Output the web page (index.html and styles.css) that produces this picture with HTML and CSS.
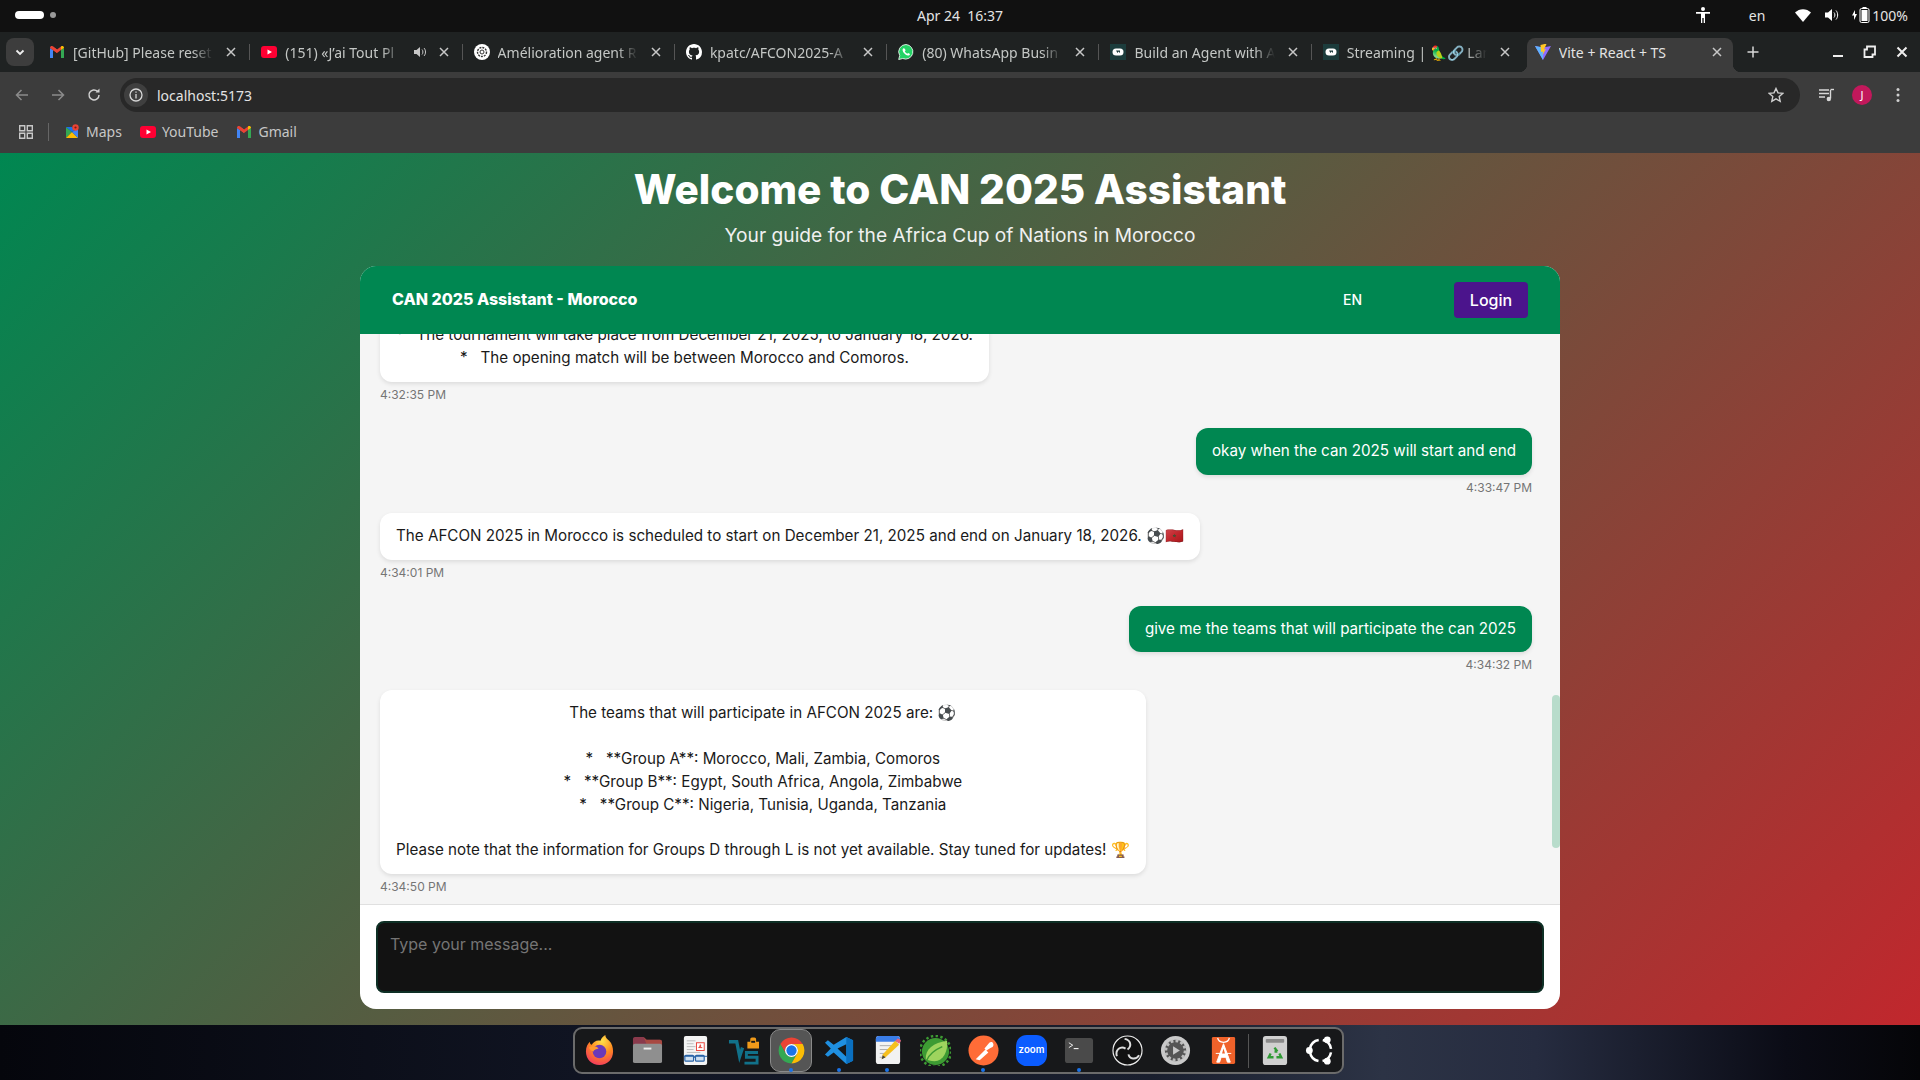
FILE: index.html
```html
<!DOCTYPE html>
<html>
<head>
<meta charset="utf-8">
<title>Vite + React + TS</title>
<link rel="stylesheet" href="styles.css">
</head>
<body>
<svg class="defs" width="0" height="0">
  <defs>
    <symbol id="gmail" viewBox="0 0 16 16">
      <path d="M1 14V4l3 2v8z" fill="#4285f4"/><path d="M12 14V6l3-2v10z" fill="#34a853"/>
      <path d="M1 4c0-2 2-2.500 3-1.500L8 5.500l-0 3.500L1 4z" fill="#ea4335"/><path d="M4 2.500L8 5.500l4-3v3.500L8 9 4 6z" fill="#ea4335"/>
      <path d="M12 2.500c1-1 3-.5 3 1.500l-3 2z" fill="#fbbc04"/>
    </symbol>
    <symbol id="yt" viewBox="0 0 16 16">
      <rect y="2" width="16" height="12" rx="3" fill="#ff0033"/><path d="M6.500 5.500v5L11 8z" fill="#fff"/>
    </symbol>
    <symbol id="lang" viewBox="0 0 16 16">
      <rect width="16" height="16" fill="#1c3c3c"/><rect x="2.500" y="4.500" width="11" height="7" rx="3.500" fill="#fff"/><path d="M6 6.500l1.500 2.500 1-1.500 1.500 1.500v-2.500z" fill="#1c3c3c"/>
    </symbol>
    <symbol id="close" viewBox="0 0 16 16">
      <path d="M4 4l8 8M12 4l-8 8" stroke="#c7c7c7" stroke-width="1.500" fill="none"/>
    </symbol>
  </defs>
</svg>

<div class="topbar">
  <div class="workspaces"><span class="pill"></span><span class="dot"></span></div>
  <div class="clock">Apr 24&nbsp;&nbsp;16:37</div>
  <div class="tray">
    <svg class="tray-a11y" width="14" height="16" viewBox="0 0 14 16"><circle cx="7" cy="2" r="2" fill="#fff"/><path d="M0 5h14v1.800H9V16H7.700v-5H6.300v5H5V6.800H0z" fill="#fff"/></svg>
    <span class="tray-lang">en</span>
    <svg class="tray-wifi" width="16" height="13" viewBox="0 0 16 13"><path d="M0 3.500C4.500-1 11.500-1 16 3.500L8 13z" fill="#fff"/></svg>
    <svg class="tray-vol" width="15" height="14" viewBox="0 0 15 14"><path d="M0 4.500h3L7 1v12L3 9.500H0z" fill="#fff"/><path d="M9 4.500c1.200 1.200 1.200 3.800 0 5M11 2.500c2.200 2.400 2.200 6.600 0 9" stroke="#fff" fill="none"/></svg>
    <svg class="tray-bat" width="18" height="16" viewBox="0 0 18 16"><path d="M3 3L0 8.500h2V13l3-6H3z" fill="#fff"/><rect x="8" y="1.500" width="9" height="14" rx="1.500" fill="none" stroke="#fff"/><rect x="9.500" y="3" width="6" height="11" fill="#fff"/><rect x="10.500" y="0" width="4" height="1.500" fill="#fff"/></svg>
    <span>100%</span>
  </div>
</div>

<div class="tabstrip">
  <div class="tab-search"><svg width="12" height="12" viewBox="0 0 12 12"><path d="M2.500 4.500L6 8l3.500-3.500" stroke="#eee" stroke-width="1.800" fill="none"/></svg></div>
  <div class="tab">
    <svg class="fav"><use href="#gmail"/></svg>
    <span class="tab-title">[GitHub] Please reset</span>
    <svg class="tab-close"><use href="#close"/></svg>
  </div>
  <div class="tab">
    <svg class="fav"><use href="#yt"/></svg>
    <span class="tab-title">(151) «J’ai Tout Pl</span>
    <svg class="tab-audio" width="16" height="16" viewBox="0 0 16 16"><path d="M2 6h2.500L8 3v10L4.500 10H2z" fill="#c7c7c7"/><path d="M10 5.500c1.200 1.300 1.200 3.700 0 5M12 4c2 2.200 2 5.800 0 8" stroke="#c7c7c7" fill="none"/></svg>
    <svg class="tab-close"><use href="#close"/></svg>
  </div>
  <div class="tab">
    <svg class="fav" viewBox="0 0 16 16"><circle cx="8" cy="8" r="8" fill="#fff"/><circle cx="8" cy="8" r="4.500" fill="none" stroke="#333" stroke-width="1.400" stroke-dasharray="2 1"/><circle cx="8" cy="8" r="2" fill="none" stroke="#333"/></svg>
    <span class="tab-title">Amélioration agent R</span>
    <svg class="tab-close"><use href="#close"/></svg>
  </div>
  <div class="tab">
    <svg class="fav" viewBox="0 0 16 16"><path fill="#fff" d="M8 0C3.580 0 0 3.580 0 8c0 3.540 2.290 6.530 5.470 7.590.4.070.55-.17.55-.38 0-.19-.01-.82-.01-1.490-2.010.37-2.530-.49-2.690-.94-.09-.23-.48-.94-.82-1.130-.28-.15-.68-.52-.01-.53.63-.01 1.080.58 1.230.82.72 1.210 1.870.87 2.330.66.070-.52.28-.87.51-1.070-1.780-.2-3.640-.89-3.640-3.950 0-.87.31-1.590.82-2.150-.08-.2-.36-1.020.08-2.120 0 0 .67-.21 2.200.82.64-.18 1.320-.27 2-.27.68 0 1.360.09 2 .27 1.530-1.040 2.200-.82 2.200-.82.44 1.100.16 1.920.08 2.120.51.56.82 1.270.82 2.150 0 3.070-1.870 3.750-3.650 3.950.29.25.54.73.54 1.480 0 1.070-.01 1.930-.01 2.200 0 .21.15.46.55.38A8.013 8.013 0 0016 8c0-4.420-3.580-8-8-8z"/></svg>
    <span class="tab-title">kpatc/AFCON2025-A</span>
    <svg class="tab-close"><use href="#close"/></svg>
  </div>
  <div class="tab">
    <svg class="fav" viewBox="0 0 16 16"><path d="M8 .5a7.300 7.300 0 0 0-6.300 11L.7 15.500l4-1A7.300 7.300 0 1 0 8 .5z" fill="#25d366" stroke="#fff" stroke-width=".8"/><path d="M5.500 4.300c-.5.300-1 1-.9 2 .2 2 3 5 5.300 5.300 1 .1 1.700-.5 2-1.100l-.2-.8-1.600-.8-.8.9c-1-.3-2.200-1.500-2.500-2.500l.8-.8-.7-1.800z" fill="#fff"/></svg>
    <span class="tab-title">(80) WhatsApp Busin</span>
    <svg class="tab-close"><use href="#close"/></svg>
  </div>
  <div class="tab">
    <svg class="fav"><use href="#lang"/></svg>
    <span class="tab-title">Build an Agent with A</span>
    <svg class="tab-close"><use href="#close"/></svg>
  </div>
  <div class="tab tab-wide">
    <svg class="fav"><use href="#lang"/></svg>
    <span class="tab-title">Streaming | 🦜🔗 Lan</span>
    <svg class="tab-close"><use href="#close"/></svg>
  </div>
  <div class="tab tab-active">
    <svg class="fav" viewBox="0 0 16 16"><path d="M0 2l8 14 8-14-8 1.500z" fill="#8f6cff"/><path d="M0 2l8 14V3.500z" fill="#5fb4ff"/><path d="M9.500 0L5.500 1 6 8l2-.5-.5 3.500 3.500-6-2 .5L11.500 0z" fill="#ffc626"/></svg>
    <span class="tab-title">Vite + React + TS</span>
    <svg class="tab-close"><use href="#close"/></svg>
  </div>
  <svg class="new-tab" width="14" height="14" viewBox="0 0 14 14"><path d="M7 1.500v11M1.500 7h11" stroke="#d8d8d8" stroke-width="1.500"/></svg>
  <div class="win-btns">
    <svg width="14" height="14" viewBox="0 0 14 14"><path d="M2 11h10" stroke="#eee" stroke-width="2"/></svg>
    <svg width="14" height="14" viewBox="0 0 14 14"><path d="M4 1.500h8v8H9.500V12h-8V4.500H4z" fill="none" stroke="#eee" stroke-width="1.800"/></svg>
    <svg width="14" height="14" viewBox="0 0 14 14"><path d="M2.500 2.500l9 9M11.500 2.500l-9 9" stroke="#eee" stroke-width="2"/></svg>
  </div>
</div>

<div class="toolbar">
  <svg class="nav-btn" width="16" height="16" viewBox="0 0 16 16"><path d="M14 8H3M7.500 3L2.500 8l5 5" stroke="#8b8b8b" stroke-width="1.500" fill="none"/></svg>
  <svg class="nav-btn" width="16" height="16" viewBox="0 0 16 16"><path d="M2 8h11M8.500 3l5 5-5 5" stroke="#8b8b8b" stroke-width="1.500" fill="none"/></svg>
  <svg class="nav-btn" width="16" height="16" viewBox="0 0 16 16"><path d="M13 8a5 5 0 1 1-1.500-3.600" stroke="#d0d0d0" stroke-width="1.500" fill="none"/><path d="M13.500 1.500v4h-4z" fill="#d0d0d0"/></svg>
  <div class="omnibox">
    <span class="site-info"><svg width="14" height="14" viewBox="0 0 14 14"><circle cx="7" cy="7" r="6" fill="none" stroke="#d8d8d8" stroke-width="1.300"/><path d="M7 6v4.500M7 3.500v1.300" stroke="#d8d8d8" stroke-width="1.300"/></svg></span>
    <span class="url">localhost:5173</span>
    <svg class="star" width="16" height="16" viewBox="0 0 16 16"><path d="M8 1.500l2 4.400 4.800.5-3.600 3.200 1 4.700L8 11.900l-4.200 2.400 1-4.700L1.200 6.400 6 5.900z" fill="none" stroke="#d0d0d0" stroke-width="1.400"/></svg>
  </div>
  <svg class="media-btn" width="16" height="16" viewBox="0 0 16 16"><path d="M0 3h10M0 6.500h10M0 10h6" stroke="#d8d8d8" stroke-width="1.400"/><path d="M11.500 3v8.500" stroke="#d8d8d8" stroke-width="1.400"/><path d="M11.500 2.500H15" stroke="#d8d8d8" stroke-width="1.400"/><circle cx="9.800" cy="12" r="2.200" fill="#d8d8d8"/></svg>
  <span class="avatar">J</span>
  <svg class="menu-btn" width="4" height="16" viewBox="0 0 4 16"><circle cx="2" cy="2.500" r="1.500" fill="#d0d0d0"/><circle cx="2" cy="8" r="1.500" fill="#d0d0d0"/><circle cx="2" cy="13.500" r="1.500" fill="#d0d0d0"/></svg>
</div>

<div class="bookmarks">
  <svg class="apps" width="14" height="14" viewBox="0 0 14 14"><path d="M.7.700h5v5h-5zM8.300.700h5v5h-5zM.7 8.300h5v5h-5zM8.300 8.300h5v5h-5z" fill="none" stroke="#c7c7c7" stroke-width="1.400"/></svg>
  <span class="bm-sep"></span>
  <div class="bm">
    <svg class="bm-icon" viewBox="0 0 16 16"><path d="M2 3l6 5-6 6z" fill="#34a853"/><path d="M2 14l6-6 6 6z" fill="#fbbc04"/><path d="M8 8l6-4v10z" fill="#4285f4"/><path d="M2 3h6l3 3-3 2z" fill="#1a73e8"/><circle cx="11.500" cy="3.500" r="3.200" fill="#ea4335"/><circle cx="11.500" cy="3.500" r="1.100" fill="#7a1a12"/></svg>
    <span>Maps</span>
  </div>
  <div class="bm">
    <svg class="bm-icon"><use href="#yt"/></svg>
    <span>YouTube</span>
  </div>
  <div class="bm">
    <svg class="bm-icon"><use href="#gmail"/></svg>
    <span>Gmail</span>
  </div>
</div>

<div class="page">
  <h1 class="page-title">Welcome to CAN 2025 Assistant</h1>
  <p class="page-sub">Your guide for the Africa Cup of Nations in Morocco</p>

  <div class="chat">
    <div class="chat-head">
      <div class="chat-name">CAN 2025 Assistant - Morocco</div>
      <div class="chat-lang">EN</div>
      <button class="login">Login</button>
    </div>

    <div class="messages">
      <div class="scroll-thumb"></div>

      <div class="msg bot">
        <div class="bubble">*   The tournament will take place from December 21, 2025, to January 18, 2026.
*   The opening match will be between Morocco and Comoros.</div>
        <div class="time">4:32:35 PM</div>
      </div>
      <div class="msg user">
        <div class="bubble">okay when the can 2025 will start and end</div>
        <div class="time">4:33:47 PM</div>
      </div>
      <div class="msg bot">
        <div class="bubble">The AFCON 2025 in Morocco is scheduled to start on December 21, 2025 and end on January 18, 2026. ⚽🇲🇦</div>
        <div class="time">4:34:01 PM</div>
      </div>
      <div class="msg user">
        <div class="bubble">give me the teams that will participate the can 2025</div>
        <div class="time">4:34:32 PM</div>
      </div>
      <div class="msg bot">
        <div class="bubble">The teams that will participate in AFCON 2025 are: ⚽

*   **Group A**: Morocco, Mali, Zambia, Comoros
*   **Group B**: Egypt, South Africa, Angola, Zimbabwe
*   **Group C**: Nigeria, Tunisia, Uganda, Tanzania

Please note that the information for Groups D through L is not yet available. Stay tuned for updates! 🏆</div>
        <div class="time">4:34:50 PM</div>
      </div>
    </div>

    <div class="composer">
      <textarea class="composer-input" placeholder="Type your message..."></textarea>
    </div>
  </div>
</div>

<div class="desk">
  <div class="dock">
    <div class="dock-item">
      <svg viewBox="0 0 32 32"><defs><radialGradient id="ff" cx=".6" cy=".2" r=".95"><stop offset="0" stop-color="#ffe14a"/><stop offset=".45" stop-color="#ff8a1f"/><stop offset="1" stop-color="#f0246e"/></radialGradient></defs><path d="M2 17C2 12 4 9 6 7c0 2 1 3 2 3 2-3 5-5 9-4 1-3 3-5 5-6 0 3 2 4 4 6 3 3 4 7 4 11 0 8-6 14-14 14S2 25 2 17z" fill="url(#ff)"/><circle cx="16" cy="17" r="7" fill="#6b39b8"/><path d="M5 13c3-2 8-2 10 1-2 1-5 1-5 3-2 0-4-2-5-4z" fill="#ff9a2e"/></svg>
    </div>
    <div class="dock-item">
      <svg viewBox="0 0 32 32"><path d="M1 4c0-1 1-2 2-2h9l3 3h14c1 0 2 1 2 2v5H1z" fill="#8a3a4c"/><path d="M12 2l3 3h14c1 0 2 1 2 2v5H16z" fill="#b5503f" opacity=".7"/><rect x="1" y="9" width="30" height="20" rx="2" fill="#8f8f8f"/><rect x="12" y="13" width="8" height="2" fill="#eee"/></svg>
    </div>
    <div class="dock-item">
      <svg viewBox="0 0 32 32"><rect x="4" y="1" width="24" height="30" rx="2" fill="#f4f4f4"/><path d="M7 6h9M7 9h7M7 12h9M7 15h7M7 18h14" stroke="#bbb"/><rect x="17" y="8" width="8" height="8" fill="#fff" stroke="#e8453c"/><path d="M19 13c2 0 3-1 2-3l-1 3h3" stroke="#e8453c" fill="none"/><rect x="5" y="21" width="9" height="6" rx="1" fill="#cfe0f0" stroke="#2a64a8" stroke-width="1.200"/><rect x="16" y="21" width="9" height="6" rx="1" fill="#cfe0f0" stroke="#2a64a8" stroke-width="1.200"/><path d="M14 23h2M4 22h24" stroke="#2a64a8"/></svg>
    </div>
    <div class="dock-item">
      <svg viewBox="0 0 32 32"><path d="M1 7h8l3 15 3-9" fill="none" stroke="#11718a" stroke-width="3.500"/><path d="M31 18H19v5h11v6H17" fill="none" stroke="#11718a" stroke-width="3"/><path d="M20 14V7h3V4c0-2 6-2 6 0v3h3v7z" fill="#f09a1a"/><rect x="24" y="6" width="4" height="2" fill="#16181a"/></svg>
    </div>
    <div class="dock-item dock-active">
      <svg viewBox="0 0 48 48"><path d="M41.320 14A20 20 0 0 0 6.680 14L15.340 29A10 10 0 0 1 24 14z" fill="#ea4335"/><path d="M6.680 14A20 20 0 0 0 24 44L32.660 29A10 10 0 0 1 15.340 29z" fill="#34a853"/><path d="M24 44A20 20 0 0 0 41.320 14L24 14A10 10 0 0 1 32.660 29z" fill="#fbbc04"/><circle cx="24" cy="24" r="10" fill="#fff"/><circle cx="24" cy="24" r="8" fill="#1a73e8"/></svg>
      <i class="run"></i>
    </div>
    <div class="dock-item">
      <svg viewBox="0 0 32 32"><path d="M23 2l7 3.500v21L23 30 10 18l-6 4.500-3-2.500 6-6-6-6 3-2.500L10 10z" fill="#1f8fe0"/><path d="M23 9.500L14 14l9 8.500z" fill="#16181a"/><path d="M23 2l7 3.500v21L23 30z" fill="#0a6fbf"/></svg>
      <i class="run"></i>
    </div>
    <div class="dock-item">
      <svg viewBox="0 0 32 32"><rect x="4" y="1" width="25" height="29" rx="3" fill="#f2f2f2"/><path d="M4 4c0-2 1-3 3-3h19c2 0 3 1 3 3v3H4z" fill="#3a7de8"/><path d="M8 11h12M8 15h10M8 19h7M8 23h5" stroke="#aaa"/><path d="M10 25l1-5L24 6l4 4-14 13z" fill="#f6c01e"/><path d="M24 6l2-2c1-1 3 1 4 2l-2 3z" fill="#e8647a"/><path d="M10 25l1-4 3 2z" fill="#444"/></svg>
      <i class="run"></i>
    </div>
    <div class="dock-item">
      <svg viewBox="0 0 32 32"><circle cx="16" cy="17" r="14" fill="#3d9b33"/><circle cx="16" cy="17" r="16" fill="none" stroke="#3d9b33" stroke-width="2.500" stroke-dasharray="2.500 2.500"/><path d="M6 25C5 15 14 8 28 6c1 11-4 21-13 21-4 0-7-1-9-2z" fill="#9ed45e"/><path d="M7 26c3-7 9-11 16-14" stroke="#3d9b33" fill="none" stroke-width="1.500"/></svg>
    </div>
    <div class="dock-item">
      <svg viewBox="0 0 32 32"><circle cx="16" cy="16" r="15.500" fill="#ff6c37"/><path d="M8 25l10-10 3 3-9 8zM17 14l5-6c1-1 4-1 4 1 1 2-1 4-2 4l-5 3z" fill="#fff"/></svg>
      <i class="run"></i>
    </div>
    <div class="dock-item">
      <svg viewBox="0 0 32 32"><rect width="32" height="32" rx="11" fill="#0b5cff"/><text class="zoom-word" x="16" y="19" text-anchor="middle">zoom</text></svg>
    </div>
    <div class="dock-item">
      <svg viewBox="0 0 32 32"><rect x="1" y="3" width="29" height="26" rx="3" fill="#4a4a4a"/><path d="M5 8l4 2.500-4 2.500" stroke="#eee" fill="none"/><path d="M10 14h5" stroke="#eee" stroke-width="1.200"/></svg>
      <i class="run"></i>
    </div>
    <div class="dock-item">
      <svg viewBox="0 0 32 32"><circle cx="16" cy="16" r="15" fill="#111" stroke="#eee" stroke-width="1.200"/><path d="M13 4c6 1 8 7 3 11M28 21c-3 5-10 4-11-1M5 22C3 15 9 11 14 14" fill="none" stroke="#ddd" stroke-width="2"/></svg>
    </div>
    <div class="dock-item">
      <svg viewBox="0 0 32 32"><circle cx="16" cy="16" r="15" fill="#c9c9c9"/><circle cx="16" cy="16" r="11" fill="#555"/><circle cx="16" cy="16" r="10" fill="none" stroke="#bdbdbd" stroke-width="3" stroke-dasharray="3 2.200"/><path d="M13.500 11.500v9l7-4.500z" fill="#c9c9c9"/></svg>
    </div>
    <div class="dock-item">
      <svg viewBox="0 0 32 32"><rect x="4" y="2" width="24" height="28" rx="1.500" fill="#f0622a"/><path d="M10 3c1 6 11 6 12 0" stroke="#fff" fill="none" stroke-width="1.300"/><path d="M16 9l-7 19h3l1.500-5h5l1.500 5h3z M8 19h16" fill="#fff" stroke="#fff"/><path d="M16 14l-1.500 5h3z" fill="#f0622a"/></svg>
    </div>
    <span class="dock-sep"></span>
    <div class="dock-item">
      <svg viewBox="0 0 32 32"><rect x="4" y="1" width="25" height="30" rx="3" fill="#d0d0d0"/><rect x="7" y="4" width="19" height="4" rx="1" fill="#8a8a8a"/><path d="M16 13l3 4M19 17h-3M12 19l-2 4h5M21 19l2 4h-5" fill="none" stroke="#2f9a34" stroke-width="2.400"/></svg>
    </div>
    <div class="dock-item dock-last">
      <svg viewBox="0 0 32 32"><circle cx="16" cy="16" r="11" fill="none" stroke="#fff" stroke-width="2.600" stroke-dasharray="13 4.300" stroke-dashoffset="-2"/><circle cx="23" cy="5" r="3.500" fill="#fff"/><circle cx="23" cy="27" r="3.500" fill="#fff"/><circle cx="4.500" cy="16" r="3.500" fill="#fff"/></svg>
    </div>
  </div>
</div>
</body>
</html>
```

FILE: styles.css
```css
* {
  box-sizing: border-box;
}

html, body {
  margin: 0;
  height: 100%;
}

body {
  width: 1920px;
  height: 1080px;
  overflow: hidden;
  display: flex;
  flex-direction: column;
  font-family: "Noto Sans", sans-serif;
  background: #111;
}

.defs {
  position: absolute;
}

/* desktop top bar */
.topbar {
  height: 32px;
  flex: none;
  padding-bottom: 2px;
  background: #111;
  color: #e4e4e4;
  font-size: 14px;
  display: grid;
  grid-template-columns: 1fr auto 1fr;
  align-items: center;
}

.workspaces {
  display: flex;
  align-items: center;
  padding-left: 15px;
  gap: 6px;
}

.pill {
  width: 29px;
  height: 8px;
  background: #fff;
  border-radius: 4px;
}

.dot {
  width: 6px;
  height: 6px;
  background: #9a9a9a;
  border-radius: 50%;
}

.tray {
  display: flex;
  align-items: center;
  justify-content: flex-end;
  padding-right: 12px;
}

.tray-a11y {
  margin-right: 39px;
}

.tray-lang {
  margin-right: 30px;
}

.tray-wifi {
  margin-right: 14px;
}

.tray-vol {
  margin-right: 12px;
}

.tray-bat {
  margin-right: 2px;
}

/* browser tabs */
.tabstrip {
  height: 40px;
  flex: none;
  background: #1f2222;
  display: flex;
  align-items: flex-end;
  color: #c4c7c5;
  font-size: 14px;
}

.tab-search {
  width: 28px;
  height: 28px;
  margin: 0 4px 6px 6px;
  border-radius: 8px;
  background: #3d3d3d;
  display: flex;
  align-items: center;
  justify-content: center;
}

.tab {
  width: 212.3px;
  height: 34px;
  flex: none;
  display: flex;
  align-items: center;
  gap: 8px;
  padding: 0 11px 6px;
  position: relative;
}

.tab::after {
  content: "";
  position: absolute;
  right: 0;
  top: 6px;
  height: 16px;
  width: 1px;
  background: #555;
}

.tab-wide {
  width: 212px;
}

.tab-wide::after {
  display: none;
}

.tab-active {
  width: 206px;
  margin: 0 3px;
  padding: 0 8px 6px;
  background: #3c3c3c;
  border-radius: 8px 8px 0 0;
  color: #e3e3e3;
}

.tab-active::before,
.tab-active::after {
  content: "";
  display: block;
  position: absolute;
  top: auto;
  bottom: 0;
  width: 8px;
  height: 8px;
}

.tab-active::before {
  left: -8px;
  background: radial-gradient(circle at 0 0, transparent 8px, #3c3c3c 8.5px);
}

.tab-active::after {
  right: -8px;
  background: radial-gradient(circle at 100% 0, transparent 8px, #3c3c3c 8.5px);
}

.fav {
  width: 16px;
  height: 16px;
  flex: none;
}

.tab-title {
  flex: 1;
  min-width: 0;
  white-space: nowrap;
  overflow: hidden;
  -webkit-mask-image: linear-gradient(90deg, #000 calc(100% - 22px), transparent calc(100% - 2px));
  mask-image: linear-gradient(90deg, #000 calc(100% - 22px), transparent calc(100% - 2px));
}

.tab-active .tab-title {
  -webkit-mask-image: none;
  mask-image: none;
}

.tab-audio {
  flex: none;
}

.tab-close {
  width: 16px;
  height: 16px;
  flex: none;
}

.new-tab {
  margin: 0 0 13px 10px;
}

.win-btns {
  margin-left: auto;
  display: flex;
  gap: 18px;
  padding: 0 11px 13px 0;
}

/* toolbar */
.toolbar {
  height: 46px;
  flex: none;
  background: #3c3c3c;
  display: flex;
  align-items: center;
  padding-left: 14px;
}

.nav-btn {
  margin-right: 20px;
}

.omnibox {
  width: 1680px;
  height: 34px;
  margin-left: -2px;
  background: #282828;
  border-radius: 17px;
  display: flex;
  align-items: center;
  padding: 0 16px 0 4px;
  color: #e3e3e3;
  font-size: 14px;
}

.site-info {
  width: 24px;
  height: 24px;
  border-radius: 50%;
  background: #3f3f3f;
  display: flex;
  align-items: center;
  justify-content: center;
  margin-right: 9px;
}

.star {
  margin-left: auto;
}

.media-btn {
  margin-left: 19px;
}

.avatar {
  width: 20px;
  height: 20px;
  margin-left: 17px;
  border-radius: 50%;
  background: #c2185b;
  color: #fff;
  font-size: 11px;
  line-height: 20px;
  text-align: center;
}

.menu-btn {
  margin-left: 24px;
}

/* bookmarks bar */
.bookmarks {
  height: 35px;
  flex: none;
  background: #3c3c3c;
  display: flex;
  align-items: center;
  padding: 0 0 8px 19px;
  color: #c7c7c7;
  font-size: 14px;
}

.bm-sep {
  width: 1px;
  height: 18px;
  background: #666;
  margin: 0 15px;
}

.bm {
  display: flex;
  align-items: center;
  gap: 6px;
  margin-right: 18px;
}

.bm-icon {
  width: 16px;
  height: 16px;
}

/* app */
.page {
  flex: 1;
  min-height: 0;
  display: flex;
  flex-direction: column;
  align-items: center;
  padding: 8px 0 16px;
  background: linear-gradient(135deg, #008751, #c1272d);
  font-family: "Inter", sans-serif;
}

.page-title {
  margin: 0;
  color: #fff;
  font-size: 40.5px;
  font-weight: 800;
  line-height: 58px;
}

.page-sub {
  margin: 1px 0 16px;
  color: #f0f0f0;
  font-size: 19.2px;
  line-height: 30px;
}

.chat {
  width: 1200px;
  flex: 1;
  min-height: 0;
  display: flex;
  flex-direction: column;
  background: #fff;
  border-radius: 16px;
  overflow: hidden;
}

.chat-head {
  height: 68px;
  flex: none;
  display: flex;
  align-items: center;
  padding: 0 32px;
  background: #008751;
  color: #fff;
}

.chat-name {
  margin: 0 auto 2px 0;
  font-size: 16px;
  font-weight: 800;
}

.chat-lang {
  margin: 0 92px 2px 0;
  font-size: 14px;
  font-weight: 500;
}

.login {
  width: 74px;
  height: 36px;
  border: 0;
  border-radius: 4px;
  background: #4b148c;
  color: #fff;
  font-family: inherit;
  font-size: 16px;
  font-weight: 500;
}

.messages {
  flex: 1;
  min-height: 0;
  position: relative;
  overflow: hidden;
  display: flex;
  flex-direction: column;
  justify-content: flex-end;
  padding: 0 28px 8px 20px;
  background: #f5f5f5;
}

.scroll-thumb {
  position: absolute;
  right: 0;
  top: 361px;
  width: 8px;
  height: 153px;
  border-radius: 4px;
  background: #b8dccb;
}

.msg {
  display: flex;
  flex-direction: column;
  flex: none;
  margin-bottom: 16px;
}

.msg.bot {
  margin-bottom: 24px;
}

.msg.bot:last-child {
  margin-bottom: 0;
}

.bot {
  align-items: flex-start;
}

.user {
  align-items: flex-end;
}

.bubble {
  padding: 12px 16px;
  border-radius: 12px;
  font-size: 15.2px;
  line-height: 1.5;
  white-space: pre-wrap;
  text-align: center;
  box-shadow: 0 2px 4px rgba(0, 0, 0, .1);
}

.bot .bubble {
  background: #fff;
  color: #1a1a1a;
}

.user .bubble {
  background: #008751;
  color: #fff;
}

.time {
  margin-top: 3px;
  color: #757575;
  font-size: 12px;
  line-height: 19px;
}

.composer {
  flex: none;
  padding: 16px;
  border-top: 1px solid #e0e0e0;
}

.composer-input {
  display: block;
  width: 100%;
  height: 72px;
  padding: 11px 12px;
  resize: none;
  border: 2px solid #0e2f25;
  border-radius: 8px;
  background: #121212;
  color: #fff;
  font-family: inherit;
  font-size: 16px;
}

.composer-input::placeholder {
  color: #757575;
}

/* dock */
.desk {
  height: 55px;
  flex: none;
  padding: 2px 0 0 573px;
  background: linear-gradient(90deg, #05060c, #101422 30%, #1a1f2e 60%, #2c3345 72%, #262c40 80%, #0b0c16 93%, #050508);
}

.dock {
  width: 771px;
  height: 47px;
  display: flex;
  align-items: center;
  background: #17181a;
  border: 2px solid #6b6b6b;
  border-radius: 9px;
}

.dock-item {
  width: 48px;
  height: 43px;
  flex: none;
  position: relative;
  display: flex;
  align-items: center;
  justify-content: center;
}

.dock-item svg {
  width: 31px;
  height: 31px;
}

.dock-last {
  width: 44px;
}

.dock-active::before {
  content: "";
  position: absolute;
  left: 3px;
  right: 3px;
  top: 0;
  bottom: 0;
  border-radius: 10px;
  background: #555;
  border: 1px solid #8a8a8a;
}

.dock-active svg {
  position: relative;
}

.run {
  position: absolute;
  left: 22px;
  bottom: 0;
  width: 4px;
  height: 4px;
  border-radius: 50%;
  background: #1a73e8;
}

.dock-sep {
  width: 1px;
  height: 34px;
  margin: 0 1px;
  flex: none;
  background: #555;
}

.zoom-word {
  fill: #fff;
  font-family: "Inter", sans-serif;
  font-size: 10px;
  font-weight: 600;
}
```
